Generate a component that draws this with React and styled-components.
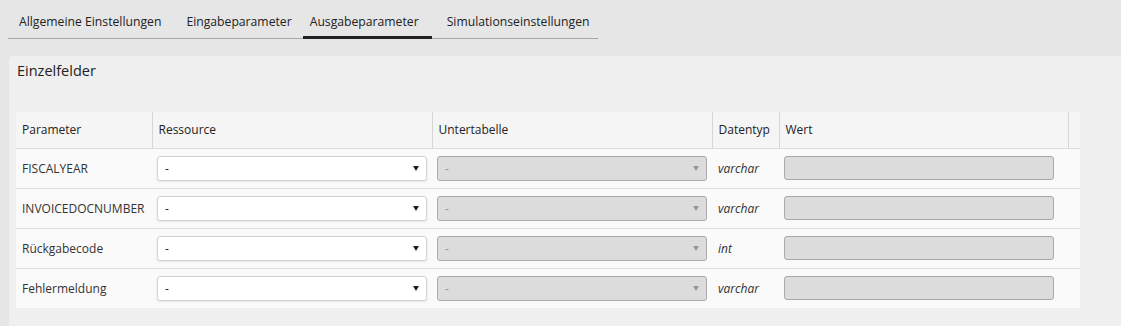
import React from 'react';
import styled, { createGlobalStyle } from 'styled-components';

const GlobalStyle = createGlobalStyle`
  html, body {
    margin: 0;
    padding: 0;
    background: #e6e6e6;
    font-family: "Open Sans", "Liberation Sans", sans-serif;
    color: #333;
  }
`;

const Page = styled.div`
  padding-top: 8px;
  min-height: 326px;
  box-sizing: border-box;
  display: flex;
  flex-direction: column;
`;

const TabBar = styled.div`
  display: flex;
  width: 590px;
  margin-left: 8px;
  border-bottom: 1px solid #a8a8a8;
  box-sizing: border-box;
`;

const Tab = styled.div`
  padding: 0 ${(p) => p.$padR || 11}px 0 ${(p) => p.$padL || 11}px;
  height: 31px;
  line-height: 28px;
  font-size: 12.2px;
  color: #222;
  box-sizing: border-box;
  border-bottom: 3px solid ${(p) => (p.$active ? '#222' : 'transparent')};
  margin-bottom: -1px;
  margin-right: ${(p) => p.$gap || 0}px;
  white-space: nowrap;
`;

const Panel = styled.div`
  flex: 1;
  margin: 17px 0 0 9px;
  background: #efefef;
  border-top-left-radius: 4px;
  padding: 5px 0 18px 7px;
`;

const Title = styled.h3`
  margin: 0 0 0 1px;
  font-size: 14.5px;
  font-weight: normal;
  color: #222;
  line-height: 20px;
  height: 51px;
`;

const Table = styled.table`
  border-collapse: collapse;
  table-layout: fixed;
  width: 1064px;
  font-size: 12px;
`;

const HeadCell = styled.th`
  background: #f5f5f5;
  font-weight: normal;
  text-align: left;
  color: #222;
  height: 36px;
  padding: 0 6px;
  box-sizing: border-box;
  border-bottom: 1px solid #dcdcdc;
  border-left: ${(p) => (p.$first ? 'none' : '1px solid #d6d6d6')};
  white-space: nowrap;
`;

const Row = styled.tr`
  background: #fafafa;
  & + & td {
    border-top: 1px solid #dcdcdc;
  }
`;

const Cell = styled.td`
  height: 40px;
  padding: 0 ${(p) => (p.$text ? 6 : 5)}px;
  box-sizing: border-box;
  font-style: ${(p) => (p.$italic ? 'italic' : 'normal')};
  color: #333;
  white-space: nowrap;
`;

const SelectBox = styled.div`
  width: 270px;
  height: 25px;
  box-sizing: border-box;
  border: 1px solid ${(p) => (p.$disabled ? '#aaa' : '#d2d2d2')};
  border-radius: 3px;
  background: ${(p) => (p.$disabled ? '#dcdcdc' : '#fff')};
  box-shadow: ${(p) => (p.$disabled ? 'none' : '0 1px 2px rgba(0,0,0,0.08)')};
  display: flex;
  align-items: center;
  justify-content: space-between;
  padding: 0 7px;
  font-size: 12px;
  color: ${(p) => (p.$disabled ? '#999' : '#222')};
`;

const Arrow = styled.span`
  width: 0;
  height: 0;
  border-left: 3px solid transparent;
  border-right: 3px solid transparent;
  border-top: 5px solid ${(p) => (p.$disabled ? '#999' : '#222')};
  margin-top: 1px;
`;

const ValueInput = styled.div`
  width: 270px;
  height: 24px;
  box-sizing: border-box;
  border: 1px solid #aaa;
  border-radius: 3px;
  background: #dcdcdc;
`;

const Select = ({ disabled }) => (
  <SelectBox $disabled={disabled}>
    <span>-</span>
    <Arrow $disabled={disabled} />
  </SelectBox>
);

const tabs = [
  { label: 'Allgemeine Einstellungen', gap: 3 },
  { label: 'Eingabeparameter', gap: 0 },
  { label: 'Ausgabeparameter', gap: 4, active: true, padL: 7, padR: 13 },
  { label: 'Simulationseinstellungen' },
];

const rows = [
  { name: 'FISCALYEAR', type: 'varchar' },
  { name: 'INVOICEDOCNUMBER', type: 'varchar' },
  { name: 'Rückgabecode', type: 'int' },
  { name: 'Fehlermeldung', type: 'varchar' },
];

export default function App() {
  return (
    <Page>
      <GlobalStyle />
      <TabBar>
        {tabs.map((t) => (
          <Tab
            key={t.label}
            $active={t.active}
            $gap={t.gap}
            $padL={t.padL}
            $padR={t.padR}
          >
            {t.label}
          </Tab>
        ))}
      </TabBar>
      <Panel>
        <Title>Einzelfelder</Title>
        <Table>
          <colgroup>
            <col style={{ width: 136 }} />
            <col style={{ width: 280 }} />
            <col style={{ width: 280 }} />
            <col style={{ width: 67 }} />
            <col style={{ width: 289 }} />
            <col style={{ width: 12 }} />
          </colgroup>
          <thead>
            <tr>
              <HeadCell $first>Parameter</HeadCell>
              <HeadCell>Ressource</HeadCell>
              <HeadCell>Untertabelle</HeadCell>
              <HeadCell>Datentyp</HeadCell>
              <HeadCell>Wert</HeadCell>
              <HeadCell />
            </tr>
          </thead>
          <tbody>
            {rows.map((r) => (
              <Row key={r.name}>
                <Cell $text>{r.name}</Cell>
                <Cell>
                  <Select />
                </Cell>
                <Cell>
                  <Select disabled />
                </Cell>
                <Cell $text $italic>{r.type}</Cell>
                <Cell>
                  <ValueInput />
                </Cell>
                <Cell />
              </Row>
            ))}
          </tbody>
        </Table>
      </Panel>
    </Page>
  );
}
